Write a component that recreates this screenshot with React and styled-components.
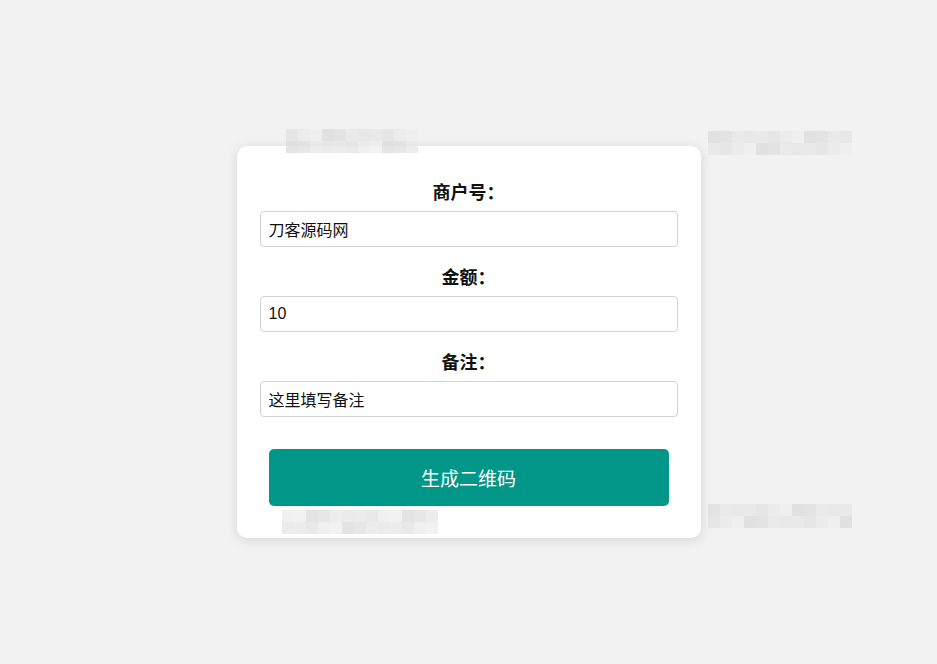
import React from "react";
import styled, { createGlobalStyle } from "styled-components";

const Global = createGlobalStyle`
  html, body { margin: 0; padding: 0; background: #f2f2f2; }
  body { font-family: "Liberation Sans", "Noto Sans CJK SC", sans-serif; }
  * { box-sizing: border-box; }
`;

const Page = styled.div`
  position: relative;
  width: 937px;
  height: 664px;
  display: flex;
  justify-content: center;
  align-items: flex-start;
  padding-top: 146px;
`;

const Card = styled.form`
  width: 464px;
  background: #fff;
  border-radius: 10px;
  box-shadow: 0 2px 12px rgba(0, 0, 0, 0.12);
  padding: 33px 23px 32px;
  display: flex;
  flex-direction: column;
`;

const Group = styled.div`
  display: flex;
  flex-direction: column;
  margin-bottom: 17px;
`;

const Label = styled.label`
  display: block;
  text-align: center;
  font-size: 18px;
  line-height: 24px;
  font-weight: bold;
  color: #111;
  margin-bottom: 8px;
  font-family: "Noto Sans CJK SC", "Liberation Sans", sans-serif;
`;

const Input = styled.input`
  width: 100%;
  height: 36px;
  border: 1px solid #d2d2d2;
  border-radius: 4px;
  padding: 0 8px;
  font-size: 16px;
  font-family: "Liberation Sans", "Noto Sans CJK SC", sans-serif;
  color: #111;
  background: #fff;
  outline: none;
`;

const Button = styled.button`
  width: 400px;
  height: 57px;
  margin: 15px auto 0;
  border: none;
  border-radius: 5px;
  background: #009688;
  color: #fff;
  font-size: 19px;
  font-family: "Liberation Sans", "Noto Sans CJK SC", sans-serif;
  cursor: pointer;
`;

const Mosaic = styled.div`
  position: absolute;
  left: ${(p) => p.$x}px;
  top: ${(p) => p.$y}px;
  display: grid;
  grid-template-columns: repeat(${(p) => p.$cols}, 12px);
  grid-auto-rows: 12px;
  opacity: 0.75;
  pointer-events: none;
`;

const Cell = styled.div`
  background: ${(p) => p.$c};
`;

const shades = ["#e8e8e8", "#e2e2e2", "#dcdcdc", "#e5e5e5", "#ebebeb", "#dfdfdf", "#e6e6e6", "#eeeeee"];

function Blur({ x, y, cols, seed }) {
  const cells = [];
  for (let i = 0; i < cols * 2; i++) {
    cells.push(<Cell key={i} $c={shades[(i * 3 + seed) % shades.length]} />);
  }
  return (
    <Mosaic $x={x} $y={y} $cols={cols}>
      {cells}
    </Mosaic>
  );
}

export default function App() {
  return (
    <>
      <Global />
      <Page>
        <Card onSubmit={(e) => e.preventDefault()}>
          <Group>
            <Label>商户号：</Label>
            <Input defaultValue="刀客源码网" />
          </Group>
          <Group>
            <Label>金额：</Label>
            <Input defaultValue="10" />
          </Group>
          <Group>
            <Label>备注：</Label>
            <Input defaultValue="这里填写备注" />
          </Group>
          <Button type="submit">生成二维码</Button>
        </Card>
        <Blur x={286} y={129} cols={11} seed={1} />
        <Blur x={708} y={131} cols={12} seed={2} />
        <Blur x={282} y={510} cols={13} seed={4} />
        <Blur x={708} y={504} cols={12} seed={5} />
      </Page>
    </>
  );
}
